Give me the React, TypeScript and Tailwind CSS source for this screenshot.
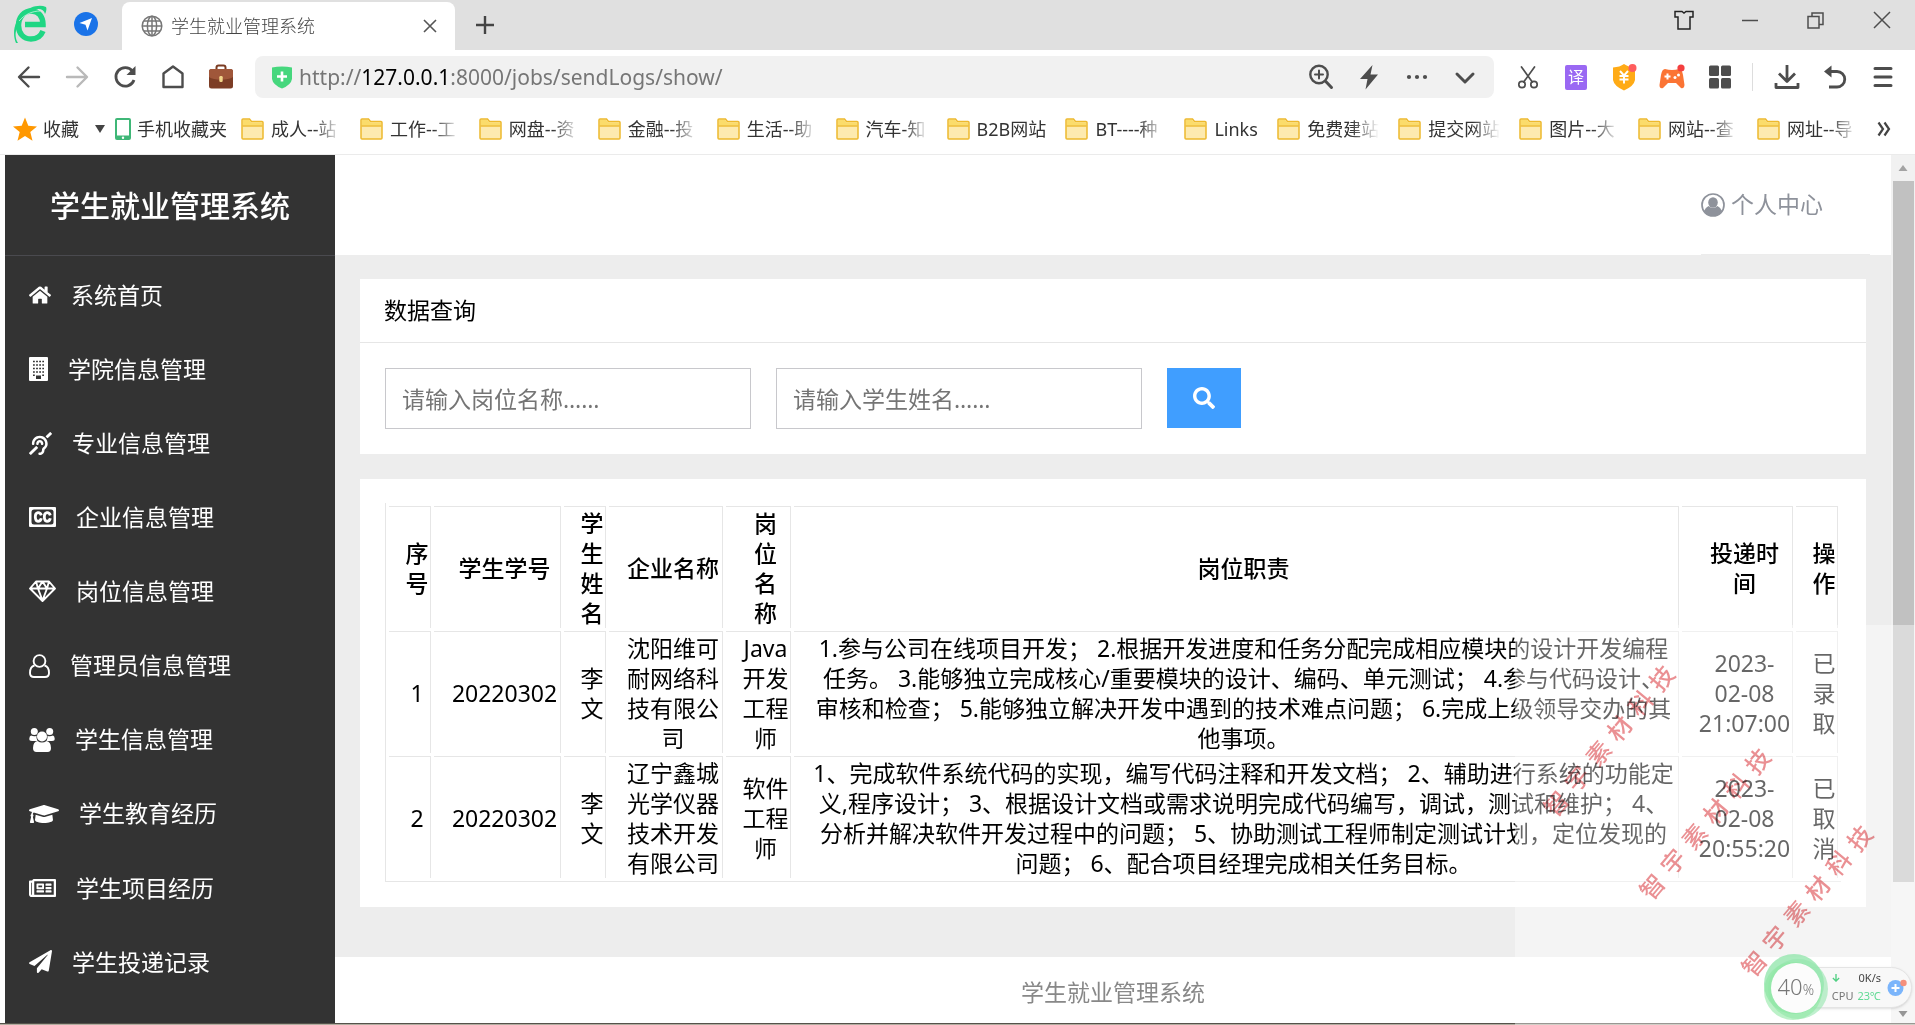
import React from "react";
import {
  FaDeaf,
  FaGraduationCap,
  FaHome,
  FaPaperPlane,
  FaRegNewspaper,
  FaSearch,
} from "react-icons/fa";

/* ---------- browser icons ---------- */

const BrowserLogo = () => (
  <svg viewBox="0 0 34 40" className="h-10 w-[34px]" fill="none" aria-hidden="true">
    <path d="M30 27C28 32 23.500 35 18 35C10.500 35 5.500 29.500 5.500 21.500C5.500 13 11 7 18.500 7C25.500 7 30 12.500 30 20.500H12" stroke="#1fd683" strokeWidth="5.500" />
    <path d="M3 39C-1 30 1 17 10 9C16 3 26 0 33 3C34 5 33 8 32 10C31 5 26 4 21 6C12 9 5 18 3 27C2 32 3 36 5 39Z" fill="#1fd683" />
    <path d="M6 17C12 10 20 7 27 7" stroke="#fff" strokeOpacity=".6" />
  </svg>
);

const NavigatorBadge = () => (
  <svg viewBox="0 0 24 24" className="size-6" aria-hidden="true">
    <circle cx="12" cy="12" r="12" fill="#1a73e8" />
    <path d="M18 6L13.500 18.500L11.500 12.800L5.500 11Z" fill="#fff" />
  </svg>
);

const Globe = () => (
  <svg viewBox="0 0 22 22" className="size-[22px]" fill="none" stroke="#777" strokeWidth="1.500" aria-hidden="true">
    <circle cx="11" cy="11" r="9.800" />
    <ellipse cx="11" cy="11" rx="4.600" ry="9.800" />
    <path d="M11 1V21M1 11H21M3 6H19M3 16H19" />
  </svg>
);

const line = {
  fill: "none",
  stroke: "#4d4d4d",
  strokeWidth: 2.4,
  strokeLinecap: "round" as const,
  strokeLinejoin: "round" as const,
  viewBox: "0 0 26 26",
  className: "size-[26px]",
  "aria-hidden": true,
};

const Back = () => (
  <svg {...line}><path d="M23 13H4M12.500 3.500L3 13L12.500 22.500" /></svg>
);
const Forward = () => (
  <svg {...line} stroke="#b9b9b9"><path d="M3 13H22M13.500 3.500L23 13L13.500 22.500" /></svg>
);
const Reload = () => (
  <svg {...line} strokeLinecap="butt" strokeWidth="2.800">
    <path d="M20.500 7A9.300 9.300 0 1 0 22 16" />
    <path d="M23.500 2V11H14.500Z" fill="#4d4d4d" stroke="none" />
  </svg>
);
const House = () => (
  <svg {...line}><path d="M3.500 9.500L13 2.500L22.500 9.500V23H3.500Z" /></svg>
);
const Briefcase = () => (
  <svg viewBox="0 0 26 26" className="size-[26px]" aria-hidden="true">
    <path d="M8.500 6V3.500A2 2 0 0 1 10.500 1.500H15.500A2 2 0 0 1 17.500 3.500V6" fill="none" stroke="#7a3b22" strokeWidth="2" />
    <rect x="1" y="5" width="24" height="19.500" rx="2.500" fill="#7c3d25" />
    <path d="M1 7.500A2.500 2.500 0 0 1 3.500 5H22.500A2.500 2.500 0 0 1 25 7.500V13C20 16.500 6 16.500 1 13Z" fill="#a0573a" />
    <rect x="11.300" y="12" width="3.400" height="6" rx="1.200" fill="#f1d58a" />
  </svg>
);
const ShieldPlus = () => (
  <svg viewBox="0 0 22 24" className="h-6 w-[22px]" aria-hidden="true">
    <path d="M1 2.500Q11 .5 21 2.500V14Q20 20 11 23.500Q2 20 1 14Z" fill="#46d77d" />
    <path d="M11 6.500V16.500M6 11.500H16" stroke="#fff" strokeWidth="2.600" />
  </svg>
);
const ZoomIn = () => (
  <svg {...line}>
    <circle cx="11" cy="10.500" r="8.700" />
    <path d="M11 6.500V14.500M7 10.500H15" strokeWidth="2" />
    <path d="M17.800 17.500L23.500 23.500" strokeWidth="3" />
  </svg>
);
const Bolt = () => (
  <svg viewBox="0 0 26 26" className="size-[26px]" aria-hidden="true"><path d="M16.500 1L4 15H11.500L9.500 25.500L22 10.500H14.500Z" fill="#4d4d4d" /></svg>
);
const Dots = () => (
  <svg viewBox="0 0 26 26" className="size-[26px]" fill="#4d4d4d" aria-hidden="true">
    <circle cx="5" cy="13" r="2.100" /><circle cx="13" cy="13" r="2.100" /><circle cx="21" cy="13" r="2.100" />
  </svg>
);
const Chevron = () => (
  <svg {...line} strokeWidth="3"><path d="M5 10L13 18L21 10" /></svg>
);
const Scissors = () => (
  <svg {...line} strokeWidth="1.700">
    <path d="M6.500 3L17.300 18M19.500 3L8.700 18" />
    <circle cx="7" cy="20.500" r="3.200" /><circle cx="19" cy="20.500" r="3.200" />
  </svg>
);
const Translate = () => (
  <span className="flex h-[25px] w-[22px] items-center justify-center rounded-xs bg-[#9a68f3] text-base leading-none text-white">译</span>
);
const YenShield = () => (
  <svg viewBox="0 0 26 28" className="h-7 w-[26px]" fill="none" aria-hidden="true">
    <path d="M13 1Q17 4 24 4.500V17Q23 23 13 27.500Q3 23 2 17V4.500Q9 4 13 1Z" fill="#ffab16" />
    <path d="M9 8L13 12.500L17 8M13 12.500V20.500M8.500 13H17.500M8.500 16.500H17.500" stroke="#fff" strokeWidth="1.900" />
    <circle cx="21.500" cy="5" r="4" fill="#ff5d5d" />
  </svg>
);
const Gamepad = () => (
  <svg viewBox="0 0 28 28" className="size-7" aria-hidden="true">
    <path d="M7 6Q14 8 21 6Q24 6 25 12L26.500 22Q26 26 23 25L18 20H10L5 25Q1.500 26 1.500 22L3 12Q4 6 7 6Z" fill="#fb7434" />
    <path d="M9.500 10.500V16.500M6.500 13.500H12.500" stroke="#fff" strokeWidth="2" />
    <circle cx="17" cy="14.500" r="1.500" fill="#fff" /><circle cx="20.500" cy="12" r="1.500" fill="#fff" />
    <circle cx="23" cy="5" r="3.600" fill="#f43f3f" />
  </svg>
);
const Apps = () => (
  <svg viewBox="0 0 26 26" className="size-[26px]" fill="#4d4d4d" aria-hidden="true">
    <rect x="2" y="1.500" width="10" height="10.500" rx="1.500" /><rect x="14" y="1.500" width="10" height="10.500" rx="1.500" />
    <rect x="2" y="14" width="10" height="10.500" rx="1.500" /><rect x="14" y="14" width="10" height="10.500" rx="1.500" />
  </svg>
);
const Download = () => (
  <svg {...line} strokeWidth="2.800" strokeLinecap="butt"><path d="M13 1V17M5 9.500L13 17.500L21 9.500M2 19V23.500H24V19" /></svg>
);
const Undo = () => (
  <svg {...line} strokeWidth="2.800" strokeLinecap="butt">
    <path d="M7 7.500H15A7.500 7.500 0 0 1 15 23H7" />
    <path d="M9.500 1.500V13.500L2 7.500Z" fill="#4d4d4d" stroke="none" />
  </svg>
);
const Menu = () => (
  <svg {...line} strokeWidth="3"><path d="M5 4.500H21M5 13H21M5 21.500H21" /></svg>
);
const Folder = () => (
  <svg viewBox="0 0 23 22" className="h-[22px] w-[23px] shrink-0" aria-hidden="true">
    <path d="M1 20V2A1 1 0 0 1 2 1H8.500L10.500 3.500H21A1 1 0 0 1 22 4.500V20A1 1 0 0 1 21 21H2A1 1 0 0 1 1 20Z" fill="#fdeaaf" stroke="#edb92e" strokeWidth="1.500" />
    <path d="M2 2H8L10 4.500H21V7.500H2Z" fill="#fbdc6b" />
    <path d="M1.500 8H21.500" stroke="#edb92e" strokeWidth="1.400" />
  </svg>
);

/* ---------- sidebar icons ---------- */

const Building = () => (
  <svg viewBox="0 0 19 24" className="h-6 w-[19px]" aria-hidden="true">
    <rect width="19" height="24" rx="1" fill="#fff" />
    <path d="M4 4.500H15M4 8H15M4 11.500H15M4 15H15" stroke="#333" strokeWidth="1.600" strokeDasharray="1.800 1.300" />
    <path d="M4 18.300H5.800M13.200 18.300H15" stroke="#333" strokeWidth="1.600" />
    <rect x="7" y="18.500" width="5" height="3.500" fill="#333" />
  </svg>
);
const Captions = () => (
  <svg viewBox="0 0 27 20" className="h-5 w-[27px]" fill="none" aria-hidden="true">
    <rect width="27" height="20" rx="1" fill="#fff" />
    <rect x="2.500" y="2.500" width="22" height="15" rx="2.500" fill="#333" />
    <path d="M12.300 8.300Q11.500 5.500 8.900 5.700Q6.200 6.200 6.300 10Q6.400 14.200 9 14.300Q11.800 14.300 12.300 11.300M21.300 8.300Q20.500 5.500 17.900 5.700Q15.200 6.200 15.300 10Q15.400 14.200 18 14.300Q20.800 14.300 21.300 11.300" stroke="#fff" strokeWidth="2.800" />
  </svg>
);
const Diamond = () => (
  <svg viewBox="0 0 27 22" className="h-[22px] w-[27px]" fill="none" stroke="#fff" strokeWidth="1.900" strokeLinejoin="round" aria-hidden="true">
    <path d="M7 1.500H20L26 8.500L13.500 21L1 8.500ZM1.500 8.500H25.500M7 1.500L9 8.500L13.500 20.500L18 8.500L20 1.500M9 8.500L13.500 1.500L18 8.500" />
  </svg>
);
const UserOutline = () => (
  <svg viewBox="0 0 21 24" className="h-6 w-[21px]" fill="none" stroke="#fff" strokeWidth="1.900" aria-hidden="true">
    <circle cx="10.500" cy="7" r="5.900" />
    <path d="M5.500 11.500Q1 12.500 1 19Q1 23 5 23H16Q20 23 20 19Q20 12.500 15.500 11.500" />
  </svg>
);
const People = () => (
  <svg viewBox="0 0 26 24" className="h-6 w-[26px]" fill="#fff" aria-hidden="true">
    <circle cx="5.300" cy="3.600" r="3.500" /><circle cx="20.700" cy="3.600" r="3.500" />
    <path d="M2 7.500Q5 9 7.500 7.800Q7 10.500 8.500 13H3Q0 13 .3 10.500Q.5 8 2 7.500ZM24 7.500Q21 9 18.500 7.800Q19 10.500 17.500 13H23Q26 13 25.700 10.500Q25.500 8 24 7.500Z" />
    <circle cx="13" cy="8.500" r="5" />
    <path d="M8.500 13Q13 16 17.500 13Q22 14 22 20Q22 24 18.500 24H7.500Q4 24 4 20Q4 14 8.500 13Z" />
  </svg>
);
const UserCircle = () => (
  <svg viewBox="0 0 24 24" className="size-6" fill="#8e929b" aria-hidden="true">
    <circle cx="12" cy="12" r="11" fill="none" stroke="#8e929b" strokeWidth="1.700" />
    <ellipse cx="12" cy="9.500" rx="4.800" ry="5.200" />
    <path d="M7.500 13Q12 17 16.500 13Q19.500 14.500 21 18Q17 23 12 23Q7 23 3 18Q4.500 14.500 7.500 13Z" />
  </svg>
);

/* ---------- data ---------- */

const bookmarks: { label: string; box: string; fade?: boolean }[] = [
  { label: "成人--站", box: "w-[70px]", fade: true },
  { label: "工作--工", box: "w-[70px]", fade: true },
  { label: "网盘--资", box: "w-[70px]", fade: true },
  { label: "金融--投", box: "w-[70px]", fade: true },
  { label: "生活--助", box: "w-[70px]", fade: true },
  { label: "汽车-知", box: "w-[62px]", fade: true },
  { label: "B2B网站", box: "w-[70px]" },
  { label: "BT----种", box: "w-[70px]", fade: true },
  { label: "Links", box: "w-[44px]" },
  { label: "免费建站", box: "w-[72px]", fade: true },
  { label: "提交网站", box: "w-[72px]", fade: true },
  { label: "图片--大", box: "w-[70px]", fade: true },
  { label: "网站--查", box: "w-[70px]", fade: true },
  { label: "网址--导", box: "w-[70px]", fade: true },
];

const navItems: { label: string; icon: React.ReactNode }[] = [
  { label: "系统首页", icon: <FaHome className="size-[22px]" /> },
  { label: "学院信息管理", icon: <Building /> },
  { label: "专业信息管理", icon: <FaDeaf className="size-[23px]" /> },
  { label: "企业信息管理", icon: <Captions /> },
  { label: "岗位信息管理", icon: <Diamond /> },
  { label: "管理员信息管理", icon: <UserOutline /> },
  { label: "学生信息管理", icon: <People /> },
  { label: "学生教育经历", icon: <FaGraduationCap className="h-6 w-[30px]" /> },
  { label: "学生项目经历", icon: <FaRegNewspaper className="h-6 w-[27px]" /> },
  { label: "学生投递记录", icon: <FaPaperPlane className="size-[23px]" /> },
];

const rows = [
  {
    id: 1,
    no: "20220302",
    name: "李文",
    company: "沈阳维可耐网络科技有限公司",
    job: "Java开发工程师",
    duty: "1.参与公司在线项目开发； 2.根据开发进度和任务分配完成相应模块的设计开发编程\n任务。 3.能够独立完成核心/重要模块的设计、编码、单元测试； 4.参与代码设计、\n审核和检查； 5.能够独立解决开发中遇到的技术难点问题； 6.完成上级领导交办的其\n他事项。",
    time: "21:07:00",
    state: "已录取",
  },
  {
    id: 2,
    no: "20220302",
    name: "李文",
    company: "辽宁鑫城光学仪器技术开发有限公司",
    job: "软件工程师",
    duty: "1、完成软件系统代码的实现，编写代码注释和开发文档； 2、辅助进行系统的功能定\n义,程序设计； 3、根据设计文档或需求说明完成代码编写，调试，测试和维护； 4、\n分析并解决软件开发过程中的问题； 5、协助测试工程师制定测试计划，定位发现的\n问题； 6、配合项目经理完成相关任务目标。",
    time: "20:55:20",
    state: "已取消",
  },
];

/* ---------- pieces ---------- */

const Tool = ({ label, children }: { label: string; children: React.ReactNode }) => (
  <button type="button" aria-label={label} className="flex h-10 w-12 shrink-0 items-center justify-center">
    {children}
  </button>
);

const WinButton = ({ label, children }: { label: string; children: React.ReactNode }) => (
  <button type="button" aria-label={label} className="flex h-10 w-[66px] items-center justify-center">
    <svg viewBox="0 0 20 24" className="h-6 w-5" fill="none" stroke="#4d4d4d" strokeWidth="1.500" aria-hidden="true">
      {children}
    </svg>
  </button>
);

const BrowserChrome = () => (
  <header className="shrink-0 border-b border-[#ebebeb] bg-white text-[#333]">
    <div className="flex h-[50px] items-start bg-[#e0e0e0]">
      <div className="flex h-12 w-[122px] shrink-0 items-center gap-[27px] pl-[13px]">
        <BrowserLogo />
        <NavigatorBadge />
      </div>
      <div className="mt-0.5 flex h-12 w-[333px] items-center gap-2 rounded-t-lg bg-white pr-4 pl-[19px]">
        <Globe />
        <span className="flex-1 text-lg font-light text-[#444]">学生就业管理系统</span>
        <button type="button" aria-label="关闭标签页" className="p-0.5">
          <svg viewBox="0 0 14 14" className="size-3.5" stroke="#555" strokeWidth="1.600" aria-hidden="true"><path d="M1 1L13 13M13 1L1 13" /></svg>
        </button>
      </div>
      <button type="button" aria-label="新建标签页" className="flex h-[50px] w-[60px] items-center justify-center">
        <svg viewBox="0 0 20 20" className="size-5" stroke="#444" strokeWidth="2.400" aria-hidden="true"><path d="M10 1V19M1 10H19" /></svg>
      </button>
      <div className="ml-auto flex">
        <WinButton label="皮肤"><path d="M5.500 3.500H8L10 5L12 3.500H14.500H19V9H16V21H4V9H1V3.500Z" stroke="#222" /></WinButton>
        <WinButton label="最小化"><path d="M2 12.500H18" /></WinButton>
        <WinButton label="还原"><path d="M2 8.500H13V20H2ZM6 8.500V5H17V16.500H13" /></WinButton>
        <WinButton label="关闭"><path d="M2 4L18 20M18 4L2 20" /></WinButton>
      </div>
    </div>

    <div className="flex h-[54px] items-center pr-2 pl-[5px]">
      <Tool label="后退"><Back /></Tool>
      <Tool label="前进"><Forward /></Tool>
      <Tool label="刷新"><Reload /></Tool>
      <Tool label="主页"><House /></Tool>
      <Tool label="工具箱"><Briefcase /></Tool>
      <div className="ml-2.5 flex h-[42px] min-w-0 flex-1 items-center rounded-lg bg-[#f1f1f1] pr-[5px] pl-4">
        <ShieldPlus />
        <div role="textbox" aria-label="地址栏" className="ml-1.5 flex-1 truncate text-[21px] leading-8 text-[#767676]">
          http://<span className="text-black">127.0.0.1</span>:8000/jobs/sendLogs/show/
        </div>
        <Tool label="缩放"><ZoomIn /></Tool>
        <Tool label="极速模式"><Bolt /></Tool>
        <Tool label="更多"><Dots /></Tool>
        <Tool label="展开"><Chevron /></Tool>
      </div>
      <div className="ml-2.5 flex items-center">
        <Tool label="截图"><Scissors /></Tool>
        <Tool label="翻译"><Translate /></Tool>
        <Tool label="优惠"><YenShield /></Tool>
        <Tool label="游戏"><Gamepad /></Tool>
        <Tool label="应用"><Apps /></Tool>
        <span className="mr-2.5 ml-2 h-7 w-px bg-[#ddd]" />
        <Tool label="下载"><Download /></Tool>
        <Tool label="撤销"><Undo /></Tool>
        <Tool label="菜单"><Menu /></Tool>
      </div>
    </div>

    <nav aria-label="书签" className="flex h-[50px] items-center pr-6 pl-[13px] text-lg">
      <a href="#fav" className="flex items-center gap-1.5">
        <svg viewBox="0 0 24 24" className="size-6" fill="#ff9800" aria-hidden="true"><path d="M12 .5L15.300 8.800L24 9.400L17.300 15L19.500 23.700L12 19L4.500 23.700L6.700 15L0 9.400L8.700 8.800Z" /></svg>
        收藏
      </a>
      <svg viewBox="0 0 10 8" className="ml-4 h-2 w-2.5" fill="#444" aria-hidden="true"><path d="M0 0H10L5 8Z" /></svg>
      <a href="#mobile" className="ml-2.5 flex shrink-0 items-center gap-1.5">
        <svg viewBox="0 0 16 22" className="h-[22px] w-4" aria-hidden="true">
          <rect width="16" height="22" rx="2" fill="#3fb777" /><rect x="2" y="2" width="12" height="15.500" fill="#fff" /><circle cx="8" cy="19.700" r="1.200" fill="#fff" />
        </svg>
        <span className="w-[90px] whitespace-nowrap">手机收藏夹</span>
      </a>
      <ul className="ml-3.5 flex min-w-0 flex-1 justify-between overflow-hidden pr-5">
        {bookmarks.map((b) => (
          <li key={b.label} className="shrink-0">
            <a href="#bookmark" className="flex items-center gap-[7px]">
              <Folder />
              <span className={`${b.box} overflow-hidden whitespace-nowrap ${b.fade ? "[mask-image:linear-gradient(to_right,#000_62%,transparent)]" : ""}`}>{b.label}</span>
            </a>
          </li>
        ))}
      </ul>
      <button type="button" aria-label="更多书签">
        <svg viewBox="0 0 14 16" className="h-4 w-3.5" fill="none" stroke="#444" strokeWidth="2.200" aria-hidden="true"><path d="M1.500 1.500L6 8L1.500 14.500M7.500 1.500L12 8L7.500 14.500" /></svg>
      </button>
    </nav>
  </header>
);

const Sidebar = () => (
  <aside className="ml-[5px] flex w-[330px] shrink-0 flex-col bg-[#333] text-white">
    <h1 className="flex h-[101px] shrink-0 items-center justify-center border-b border-[#4a4a4f] text-[30px] font-medium">
      学生就业管理系统
    </h1>
    <ul className="flex flex-1 flex-col pt-0.5 pb-6">
      {navItems.map((item) => (
        <li key={item.label} className="flex flex-1">
          <a href="#menu" className="flex flex-1 items-center gap-5 pl-6 text-[23px]">
            {item.icon}
            {item.label}
          </a>
        </li>
      ))}
    </ul>
  </aside>
);

const cell = "border-t border-r border-[#e6e6e6] pr-px pt-px pl-4 font-normal";
const head = "border-t border-r border-[#e6e6e6] pr-px pt-px pl-4 font-medium";

const LogTable = () => (
  <table className="w-full table-fixed border-separate border-spacing-[3px] border-b border-l border-[#e6e6e6] text-center text-[23px] leading-[30px] text-black">
    <colgroup>
      <col className="w-[42px]" />
      <col className="w-[127px]" />
      <col className="w-[42px]" />
      <col className="w-[114px]" />
      <col className="w-[65px]" />
      <col />
      <col className="w-[111px]" />
      <col className="w-[42px]" />
    </colgroup>
    <thead>
      <tr>
        <th className={head}>序号</th>
        <th className={head}>学生学号</th>
        <th className={head}>学生姓名</th>
        <th className={head}>企业名称</th>
        <th className={head}>岗<br />位<br />名<br />称</th>
        <th className={head}>岗位职责</th>
        <th className={head}>投递时<br />间</th>
        <th className={head}>操作</th>
      </tr>
    </thead>
    <tbody>
      {rows.map((r) => (
        <tr key={r.id}>
          <td className={cell}>{r.id}</td>
          <td className={cell}>{r.no}</td>
          <td className={cell}>{r.name}</td>
          <td className={cell}>{r.company}</td>
          <td className={cell}>{r.job}</td>
          <td className={`${cell} whitespace-pre-line`}>{r.duty}</td>
          <td className={cell}>2023-<br />02-08<br />{r.time}</td>
          <td className={cell}>{r.state}</td>
        </tr>
      ))}
    </tbody>
  </table>
);

const SearchBox = ({ placeholder }: { placeholder: string }) => (
  <input
    type="text"
    aria-label={placeholder}
    placeholder={placeholder}
    className="h-[61px] w-[366px] border border-[#c8c8cc] px-4 text-[23px] text-black placeholder:text-[#757575]"
  />
);

const Main = () => (
  <main className="flex min-w-0 flex-1 flex-col bg-[#ededed]">
    <div className="flex h-[100px] shrink-0 items-center justify-end bg-white pr-[21px]">
      <a href="#me" className="flex h-full w-[169px] items-center gap-1.5 border-b border-[#ececec] text-[23px] text-[#8e929b]">
        <UserCircle />
        个人中心
      </a>
    </div>
    <section className="mx-[25px] mt-6 bg-white text-[23px]">
      <h2 className="flex h-16 items-center border-b border-[#e6e6e6] px-6 text-black">数据查询</h2>
      <form className="flex gap-[25px] p-[25px]" onSubmit={(e) => e.preventDefault()}>
        <SearchBox placeholder="请输入岗位名称……" />
        <SearchBox placeholder="请输入学生姓名……" />
        <button type="submit" aria-label="查询" className="flex h-[60px] w-[74px] items-center justify-center bg-[#409eff] text-white">
          <FaSearch className="size-[22px]" />
        </button>
      </form>
    </section>
    <section className="mx-[25px] mt-[25px] bg-white px-[25px] pt-6 pb-[25px]">
      <LogTable />
    </section>
    <footer className="mt-[50px] flex flex-1 items-center justify-center bg-white pt-1 text-[23px] text-[#888]">
      学生就业管理系统
    </footer>
  </main>
);

const Watermark = ({ place }: { place: string }) => (
  <div className={`absolute ${place} flex w-[188px] -rotate-50 justify-between text-2xl leading-8 font-medium text-[#d9343a] opacity-55 mix-blend-multiply`}>
    {"智宇素材科技".split("").map((c) => (
      <span key={c}>{c}</span>
    ))}
  </div>
);

const SpeedBall = () => (
  <div className="absolute right-[3px] bottom-[5px] flex h-[66px] items-center">
    <div className="-mr-8 size-[66px] shrink-0" />
    <div className="flex h-[41px] items-center gap-1.5 rounded-r-full border border-[#e4e4e4] bg-[#f8f8f8] pr-1 pl-[34px] shadow-sm">
      <div className="grid grid-cols-[auto_auto] items-center gap-x-1 text-[11px] leading-[18px] text-[#777]">
        <svg viewBox="0 0 8 9" className="h-2 w-2" fill="none" stroke="#4fcf82" strokeWidth="1.500" aria-hidden="true"><path d="M4 0V8M.5 4.500L4 8L7.500 4.500" /></svg>
        <span className="text-right text-[#444]">0K/s</span>
        <span>CPU</span>
        <span className="text-[#5fda93]">23℃</span>
      </div>
      <svg viewBox="0 0 20 20" className="size-5" aria-hidden="true">
        <circle cx="8.500" cy="11" r="8" fill="#7bb5fb" /><path d="M8.500 7V15M4.500 11H12.500" stroke="#fff" strokeWidth="2" /><circle cx="16.500" cy="6" r="3.200" fill="#f5907c" />
      </svg>
    </div>
    <div className="absolute left-0 flex size-[66px] items-center justify-center">
      <svg viewBox="0 0 66 66" className="absolute inset-0 size-full" aria-hidden="true">
        <circle cx="31" cy="30" r="30" fill="#95e6ae" fillOpacity=".8" />
        <circle cx="35" cy="35" r="30" fill="#95e6ae" fillOpacity=".6" />
        <circle cx="30" cy="37" r="29" fill="#8fe8a4" fillOpacity=".6" />
        <circle cx="33" cy="34" r="25" fill="#fcfcfc" />
      </svg>
      <span className="relative text-[22px] leading-none font-light text-[#777]">40<span className="text-sm">%</span></span>
    </div>
  </div>
);

const Scrollbar = () => (
  <div className="flex w-6 shrink-0 flex-col items-center bg-[#f1f1f1] pb-1.5" aria-hidden="true">
    <svg viewBox="0 0 12 8" className="my-2.5 h-1.5 w-3" fill="#a3a3a3"><path d="M0 8L6 0L12 8Z" /></svg>
    <div className="h-[701px] w-[21px] bg-[#c1c1c1]" />
    <svg viewBox="0 0 12 8" className="mt-auto h-1.5 w-3" fill="#505050"><path d="M0 0H12L6 8Z" /></svg>
  </div>
);

export default function App() {
  return (
    <div className="relative flex h-screen flex-col overflow-hidden bg-white font-['Noto_Sans','Noto_Sans_CJK_SC',sans-serif]">
      <BrowserChrome />
      <div className="flex min-h-0 flex-1">
        <Sidebar />
        <Main />
        <Scrollbar />
      </div>
      <div className="h-0.5 shrink-0 border-t border-[#55524b] bg-[#b3ada0]" />
      <div className="pointer-events-none absolute right-0 bottom-0 h-[400px] w-[400px] bg-white/40" />
      <Watermark place="right-[212px] bottom-[268px]" />
      <Watermark place="right-[116px] bottom-[185px]" />
      <Watermark place="right-[14px] bottom-[108px]" />
      <SpeedBall />
    </div>
  );
}
